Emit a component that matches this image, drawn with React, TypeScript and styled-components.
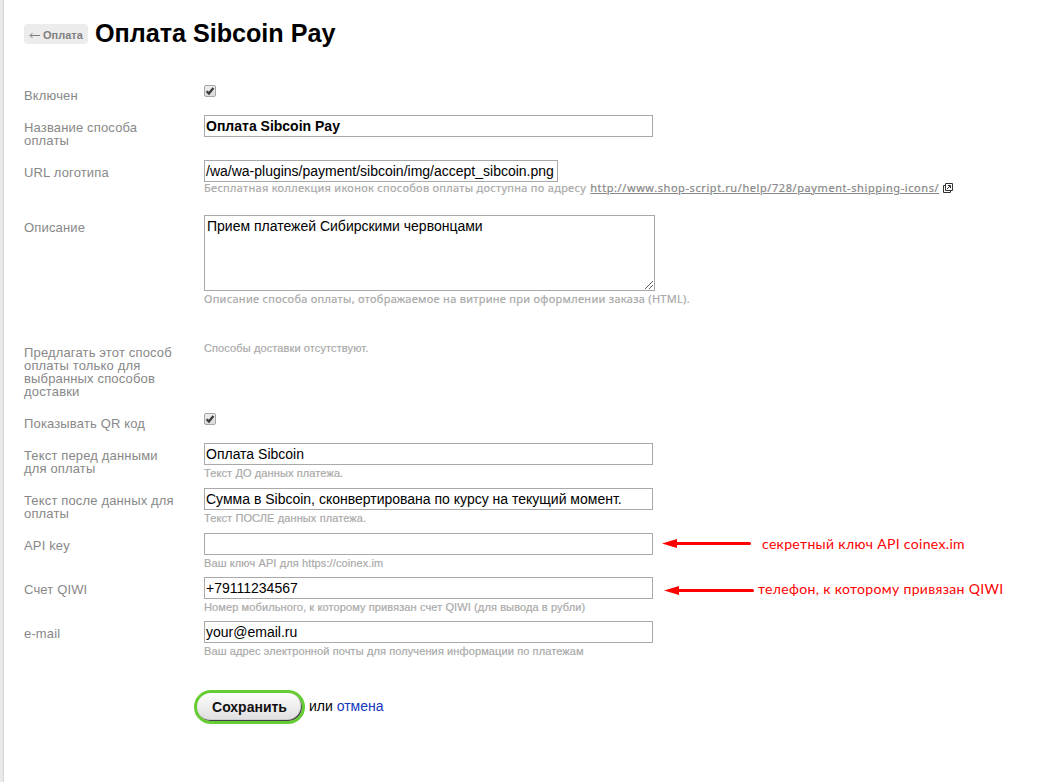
import React from 'react';
import styled, { createGlobalStyle } from 'styled-components';

const GlobalStyle = createGlobalStyle`
  * { box-sizing: border-box; }
  body {
    margin: 0;
    background: #fff;
    color: #000;
    font: 14px/16px 'Liberation Sans', Arial, sans-serif;
  }
`;

const Page = styled.div`
  display: flex;
  height: 782px;
  overflow: hidden;
`;

const Edge = styled.div`
  flex: none;
  width: 4px;
  background: linear-gradient(to right, #ececec 0, #e6e6e6 3px, #d8d8d8 3px);
`;

const Content = styled.main`
  flex: 1;
  min-width: 0;
  padding: 18px 0 0 20px;
`;

const Header = styled.header`
  display: flex;
  height: 65px;
  gap: 7px;
`;

const BackLink = styled.a`
  display: flex;
  align-items: center;
  gap: 2px;
  width: 64px;
  height: 20px;
  margin-top: 6px;
  padding: 2px 0 0 5px;
  border-radius: 4px;
  background: #ececec;
  color: #808080;
  font-size: 11px;
  font-weight: bold;
  white-space: nowrap;
`;

const Title = styled.h1`
  margin: 0;
  font-size: 25.2px;
  line-height: 31px;
  letter-spacing: -0.03px;
  white-space: nowrap;
`;

const Row = styled.div<{ $height: number }>`
  display: flex;
  height: ${(p) => p.$height}px;
`;

const Label = styled.label`
  flex: none;
  width: 180px;
  padding: 6px 28px 0 0;
  color: #888;
  font-size: 13px;
  line-height: 13px;
  letter-spacing: 0.155px;
`;

const Value = styled.div<{ $top?: number }>`
  flex: none;
  width: 449px;
  padding-top: ${(p) => p.$top ?? 0}px;
`;

const Input = styled.div<{ $bold?: boolean; $width?: number }>`
  width: ${(p) => p.$width ?? 449}px;
  height: 22px;
  padding: 2px 1px 0;
  border: 1px solid #a9a9a9;
  font-weight: ${(p) => (p.$bold ? 'bold' : 'normal')};
  white-space: nowrap;
`;

const TextArea = styled.div`
  display: flex;
  justify-content: space-between;
  width: 451px;
  height: 76px;
  padding: 2px 0 0 2px;
  border: 1px solid #a9a9a9;

  svg { align-self: flex-end; }
`;

const Hint = styled.div<{ $wide?: boolean; $top?: number }>`
  margin-top: ${(p) => p.$top ?? 2}px;
  color: #aaa;
  font-family: ${(p) => (p.$wide ? "'Noto Sans', sans-serif" : 'inherit')};
  font-size: 11px;
  line-height: 13px;
  letter-spacing: ${(p) => (p.$wide ? 0.287 : 0.11)}px;
  -webkit-text-stroke: 0.2px currentColor;
  white-space: nowrap;

  svg { vertical-align: -1px; }
`;

const HintLink = styled.a`
  margin: 0 4px 0 1px;
  color: #888;
  letter-spacing: 0.578px;
  text-decoration: underline;
`;

const CheckBox = styled.span`
  display: flex;
  width: 12px;
  height: 12px;
  border: 1px solid #a6a6a6;
  border-radius: 2px;
  background: linear-gradient(#eee, #dcdcdc);
`;

const Note = styled.div<{ $indent: number; $gap: number; $down: number }>`
  display: flex;
  align-items: center;
  gap: ${(p) => p.$gap}px;
  height: 22px;
  margin: ${(p) => p.$down}px 0 0 ${(p) => p.$indent}px;
  color: #f00;
  font: 14px/18px Lato, sans-serif;
  white-space: nowrap;
`;

const NoteText = styled.span<{ $spacing: number; $lift?: number }>`
  padding-bottom: ${(p) => p.$lift ?? 0}px;
  letter-spacing: ${(p) => p.$spacing}px;
`;

const Actions = styled.div`
  display: flex;
  align-items: center;
  gap: 4px;
  padding-left: 170px;
`;

const ActionsText = styled.span`
  padding-bottom: 2px;
`;

const SaveButton = styled.button`
  width: 111px;
  height: 34px;
  padding: 0 0 1px;
  border: 3px solid #66cc33;
  border-radius: 17px;
  background: linear-gradient(#fdfdfd, #dedede);
  box-shadow: inset -1px -1px 1px #333;
  color: #111;
  font: bold 14px/16px 'Liberation Sans', Arial, sans-serif;
`;

const Cancel = styled.a`
  color: #1438c0;
`;

const Checked = () => (
  <CheckBox>
    <svg width="10" height="10" viewBox="0 0 10 10">
      <path d="M1.6 5.2L3.9 7.5L8.4 2" fill="none" stroke="#3c3c3c" strokeWidth="2.3" />
    </svg>
  </CheckBox>
);

const Arrow = ({ length }: { length: number }) => (
  <svg width={length} height="10" viewBox={`0 0 ${length} 10`}>
    <path d="M0 4.5L15 0V9Z" fill="#f00" />
    <path d={`M13 4.5H${length - 1.5}`} stroke="#f00" strokeWidth="3" strokeLinecap="round" />
  </svg>
);

const ExternalIcon = () => (
  <svg width="10" height="10" viewBox="0 0 10 10" fill="none" stroke="#333">
    <path d="M2.5 .5H9.5V7.5H2.5ZM2 2.5H.5V9.5H7.5V8" />
    <path d="M4 6L7.3 2.7M4.8 2.5H7.5V5.2" />
  </svg>
);

const Grip = () => (
  <svg width="10" height="10" viewBox="0 0 10 10">
    <path d="M1 9L9 1M5 9L9 5" stroke="#666" />
  </svg>
);

export default function App() {
  return (
    <>
      <GlobalStyle />
      <Page>
        <Edge />
        <Content>
          <Header>
            <BackLink>
              <svg width="12" height="9" viewBox="0 0 12 9" fill="none" stroke="#808080">
                <path d="M1 4.5H11M3.5 2L1 4.5L3.5 7" />
              </svg>
              Оплата
            </BackLink>
            <Title>Оплата Sibcoin Pay</Title>
          </Header>

          <Row $height={32}>
            <Label>Включен</Label>
            <Value $top={2}><Checked /></Value>
          </Row>
          <Row $height={45}>
            <Label>Название способа оплаты</Label>
            <Value><Input $bold>Оплата Sibcoin Pay</Input></Value>
          </Row>
          <Row $height={55}>
            <Label>URL логотипа</Label>
            <Value>
              <Input $width={354}>/wa/wa-plugins/payment/sibcoin/img/accept_sibcoin.png</Input>
              <Hint $wide $top={-1}>
                Бесплатная коллекция иконок способов оплаты доступна по адресу{' '}
                <HintLink>http://www.shop-script.ru/help/728/payment-shipping-icons/</HintLink>
                <ExternalIcon />
              </Hint>
            </Value>
          </Row>
          <Row $height={125}>
            <Label>Описание</Label>
            <Value>
              <TextArea>Прием платежей Сибирскими червонцами<Grip /></TextArea>
              <Hint $wide $top={1}>Описание способа оплаты, отображаемое на витрине при оформлении заказа (HTML).</Hint>
            </Value>
          </Row>
          <Row $height={71}>
            <Label>Предлагать этот способ оплаты только для выбранных способов доставки</Label>
            <Value><Hint>Способы доставки отсутствуют.</Hint></Value>
          </Row>
          <Row $height={32}>
            <Label>Показывать QR код</Label>
            <Value $top={2}><Checked /></Value>
          </Row>
          <Row $height={45}>
            <Label>Текст перед данными для оплаты</Label>
            <Value>
              <Input>Оплата Sibcoin</Input>
              <Hint>Текст ДО данных платежа.</Hint>
            </Value>
          </Row>
          <Row $height={45}>
            <Label>Текст после данных для оплаты</Label>
            <Value>
              <Input>Сумма в Sibcoin, сконвертирована по курсу на текущий момент.</Input>
              <Hint>Текст ПОСЛЕ данных платежа.</Hint>
            </Value>
          </Row>
          <Row $height={44}>
            <Label>API key</Label>
            <Value>
              <Input />
              <Hint>Ваш ключ API для https://coinex.im</Hint>
            </Value>
            <Note $indent={9} $gap={11} $down={0}>
              <Arrow length={89} />
              <NoteText $spacing={0.33}>секретный ключ API coinex.im</NoteText>
            </Note>
          </Row>
          <Row $height={44}>
            <Label>Счет QIWI</Label>
            <Value>
              <Input>+79111234567</Input>
              <Hint>Номер мобильного, к которому привязан счет QIWI (для вывода в рубли)</Hint>
            </Value>
            <Note $indent={11} $gap={4} $down={3}>
              <Arrow length={90} />
              <NoteText $spacing={0.33} $lift={4}>телефон, к которому привязан QIWI</NoteText>
            </Note>
          </Row>
          <Row $height={69}>
            <Label>e-mail</Label>
            <Value>
              <Input>your@email.ru</Input>
              <Hint>Ваш адрес электронной почты для получения информации по платежам</Hint>
            </Value>
          </Row>

          <Actions>
            <SaveButton>Сохранить</SaveButton>
            <ActionsText>или <Cancel>отмена</Cancel></ActionsText>
          </Actions>
        </Content>
      </Page>
    </>
  );
}
